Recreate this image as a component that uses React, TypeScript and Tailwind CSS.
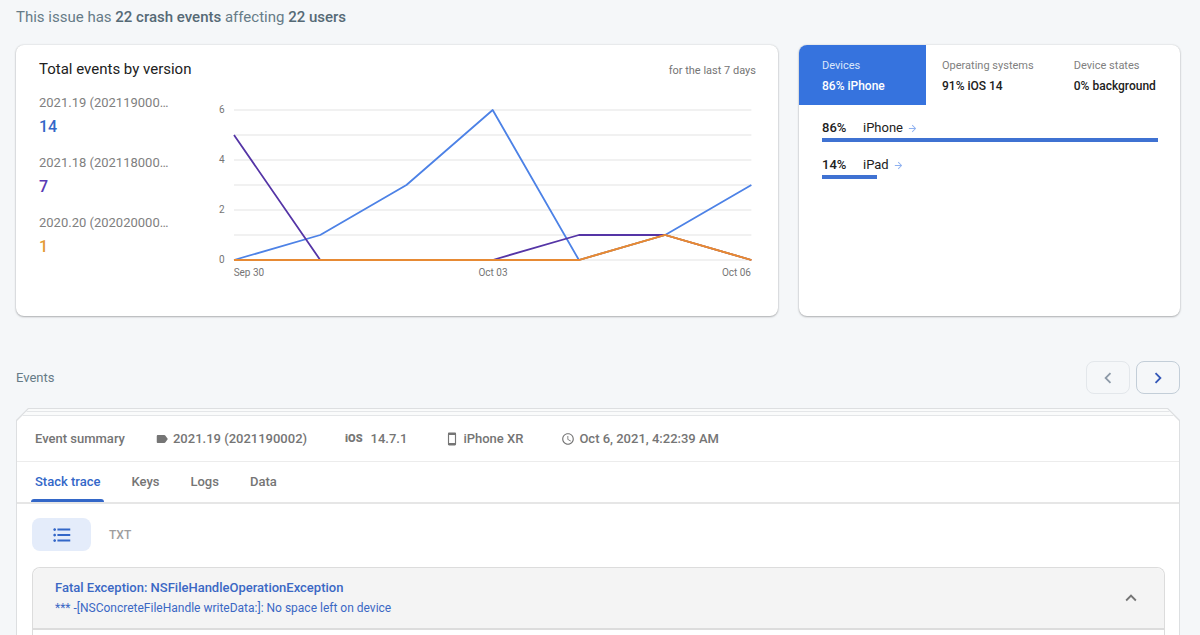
import { useState } from "react";
import {
  MdAccessTime,
  MdArrowForward,
  MdChevronLeft,
  MdChevronRight,
  MdFormatListBulleted,
  MdKeyboardArrowUp,
  MdLabel,
  MdStayPrimaryPortrait,
} from "react-icons/md";
import { clsx } from "clsx";

const MAX_EVENTS = 6;

const versions = [
  {
    name: "2021.19 (202119000…",
    total: 14,
    text: "text-[#3367c8]",
    stroke: "#4d82e6",
    series: [0, 1, 3, 6, 0, 1, 3],
  },
  {
    name: "2021.18 (202118000…",
    total: 7,
    text: "text-[#5a3bb5]",
    stroke: "#5535a6",
    series: [5, 0, 0, 0, 1, 1, 0],
  },
  {
    name: "2020.20 (202020000…",
    total: 1,
    text: "text-[#e39a35]",
    stroke: "#e78a34",
    series: [0, 0, 0, 0, 0, 1, 0],
  },
];

const breakdowns = [
  { label: "Devices", value: "86% iPhone" },
  { label: "Operating systems", value: "91% iOS 14" },
  { label: "Device states", value: "0% background" },
];

const devices = [
  { name: "iPhone", share: 86 },
  { name: "iPad", share: 14 },
];

const tabs = ["Stack trace", "Keys", "Logs", "Data"];

const cardClass =
  "overflow-hidden rounded-lg bg-white shadow-[0_1px_2px_rgba(60,64,67,0.35),0_0_2px_rgba(60,64,67,0.2)]";

// Break the line wherever it would just run along the zero axis.
function linePath(series: number[]) {
  let d = "";
  let pen = false;
  for (let i = 0; i < series.length - 1; i++) {
    if (series[i] === 0 && series[i + 1] === 0) {
      pen = false;
      continue;
    }
    if (!pen) d += `M${i * 100} ${(MAX_EVENTS - series[i]) * 25}`;
    d += `L${(i + 1) * 100} ${(MAX_EVENTS - series[i + 1]) * 25}`;
    pen = true;
  }
  return d;
}

function EventsChart() {
  return (
    <div className="flex min-w-0 flex-1 gap-[9px] text-[10px] leading-4 text-[#757575]">
      <div className="-my-2 flex h-[166px] flex-col justify-between">
        {[6, 4, 2, 0].map((n) => (
          <span key={n}>{n}</span>
        ))}
      </div>
      <div className="min-w-0 flex-1">
        <svg
          className="block h-[150px] w-full overflow-visible"
          viewBox="0 0 600 150"
          preserveAspectRatio="none"
          fill="none"
          role="img"
          aria-label="Events per day by version"
        >
          {[0, 25, 50, 75, 100, 125, 150].map((y) => (
            <path
              key={y}
              d={`M0 ${y}H600`}
              stroke="#ececec"
              strokeWidth="1.5"
              vectorEffect="non-scaling-stroke"
            />
          ))}
          {versions.map((v) => (
            <path
              key={v.name}
              d={linePath(v.series)}
              stroke={v.stroke}
              strokeWidth="1.8"
              strokeLinejoin="round"
              vectorEffect="non-scaling-stroke"
            />
          ))}
          <path
            d="M0 150H400L500 125L600 150"
            stroke={versions[2].stroke}
            strokeWidth="1.8"
            vectorEffect="non-scaling-stroke"
          />
        </svg>
        <div className="mt-[5px] flex justify-between">
          <span>Sep 30</span>
          <span>Oct 03</span>
          <span>Oct 06</span>
        </div>
      </div>
    </div>
  );
}

function VersionsCard() {
  return (
    <section className={clsx(cardClass, "pt-[14px] pr-[22px] pb-[35px] pl-[23px]")}>
      <div className="flex items-end justify-between">
        <h2 className="text-[15px] leading-5 text-[#212121]">
          Total events by version
        </h2>
        <span className="text-[11px] leading-4 text-[#757575]">
          for the last 7 days
        </span>
      </div>
      <div className="mt-[14px] flex gap-[50px] pr-[5px]">
        <ul className="flex w-[130px] flex-col gap-4">
          {versions.map((v) => (
            <li key={v.name}>
              <div className="text-[13px] leading-5 whitespace-nowrap text-[#808080]">
                {v.name}
              </div>
              <div
                className={clsx("mt-1 text-base leading-5 font-medium", v.text)}
              >
                {v.total}
              </div>
            </li>
          ))}
        </ul>
        <div className="flex min-w-0 flex-1 pt-[17px]">
          <EventsChart />
        </div>
      </div>
    </section>
  );
}

function DevicesCard() {
  const [selected, setSelected] = useState(0);
  const top = devices[0].share;

  return (
    <section className={cardClass}>
      <div className="flex">
        {breakdowns.map((b, i) => (
          <button
            key={b.label}
            type="button"
            onClick={() => setSelected(i)}
            className={clsx(
              "pt-[11px] pb-[9px] text-left leading-5",
              i === 0 ? "w-1/3 pl-[23px]" : "flex-auto pl-4",
              i === selected ? "bg-[#3673de] text-white" : "text-[#212121]",
            )}
          >
            <span
              className={clsx(
                "block text-[11px]",
                i === selected ? "text-[#dbe7fb]" : "text-[#808080]",
              )}
            >
              {b.label}
            </span>
            <span className="block text-[12px] font-medium">{b.value}</span>
          </button>
        ))}
      </div>
      <ul className="flex flex-col gap-[13px] pt-[13px] pr-[22px] pl-[23px]">
        {devices.map((d) => (
          <li key={d.name}>
            <div className="flex items-center text-[13px] leading-5 text-[#212121]">
              <span className="w-[41px] font-medium">{d.share}%</span>
              <a href="#" className="flex items-center gap-1">
                {d.name}
                <MdArrowForward className="size-[11px] text-[#8fb1f0]" />
              </a>
            </div>
            <div
              className="h-1 bg-[#3f72d2]"
              style={{ width: `${(d.share / top) * 100}%` }}
            />
          </li>
        ))}
      </ul>
    </section>
  );
}

function EventDetails() {
  const [tab, setTab] = useState(tabs[0]);

  return (
    <div className="flex flex-1 flex-col text-[13px] font-medium text-[#757575]">
      <div className="flex h-[46px] items-center gap-[38px] border-b border-[#ececec] pl-[18px] leading-5">
        <div className="flex items-center gap-[30px]">
          <h3>Event summary</h3>
          <span className="flex items-center gap-1">
            <MdLabel className="size-[14px]" />
            2021.19 (2021190002)
          </span>
        </div>
        <span className="flex items-center gap-2">
          <b className="text-[11px] font-black">iOS</b>
          14.7.1
        </span>
        <span className="flex items-center gap-1">
          <MdStayPrimaryPortrait className="size-[14px]" />
          iPhone XR
        </span>
        <span className="flex items-center gap-1">
          <MdAccessTime className="size-[14px]" />
          Oct 6, 2021, 4:22:39 AM
        </span>
      </div>

      <div className="flex h-[42px] gap-[23px] border-b-2 border-[#e6e6e6] pl-[14px]">
        {tabs.map((name) => (
          <button
            key={name}
            type="button"
            onClick={() => setTab(name)}
            className={clsx(
              "relative px-1",
              name === tab && "text-[#3367c8]",
            )}
          >
            {name}
            {name === tab && (
              <span className="absolute inset-x-0 bottom-0 h-[3px] rounded-t-sm bg-[#3367c8]" />
            )}
          </button>
        ))}
      </div>

      <div className="flex flex-1 flex-col pt-[14px] pr-[14px] pl-[15px]">
        <div className="flex gap-[18px]">
          <button
            type="button"
            aria-label="List view"
            className="flex h-[33px] w-[59px] items-center justify-center rounded-lg bg-[#e4ecfa] text-[#3367c8]"
          >
            <MdFormatListBulleted className="size-[22px]" />
          </button>
          <button type="button" className="text-[12px] text-[#9e9e9e]">
            TXT
          </button>
        </div>

        <div className="mt-4 flex-1 rounded-t-lg border border-b-0 border-[#dcdcdc]">
          <div className="flex items-center justify-between rounded-t-lg border-b-2 border-[#dcdcdc] bg-[#f4f4f4] py-[10px] pr-[22px] pl-[22px] text-[#3b68c4]">
            <div>
              <h4 className="leading-5">
                Fatal Exception: NSFileHandleOperationException
              </h4>
              <p className="text-[12px] leading-5 font-normal">
                *** -[NSConcreteFileHandle writeData:]: No space left on device
              </p>
            </div>
            <button type="button" aria-label="Collapse">
              <MdKeyboardArrowUp className="size-[22px] text-[#757575]" />
            </button>
          </div>
        </div>
      </div>
    </div>
  );
}

export default function App() {
  return (
    <main className="flex min-h-screen flex-col bg-[#f5f7f9] pt-[7px] pr-5 pl-4 font-[Roboto,sans-serif]">
      <p className="text-[15px] leading-5 text-[#667b87]">
        This issue has{" "}
        <strong className="font-medium text-[#566a76]">22 crash events</strong>{" "}
        affecting{" "}
        <strong className="font-medium text-[#566a76]">22 users</strong>
      </p>

      <div className="mt-[18px] grid grid-cols-[2fr_1fr] gap-[21px]">
        <VersionsCard />
        <DevicesCard />
      </div>

      <div className="mt-[45px] flex items-center justify-between">
        <h2 className="text-[13px] leading-5 text-[#667b87]">Events</h2>
        <div className="flex gap-[6px]">
          <button
            type="button"
            aria-label="Previous event"
            className="flex h-[33px] w-11 items-center justify-center rounded-lg border border-[#e3e7eb] text-[#8d9aa8]"
          >
            <MdChevronLeft className="size-[22px]" />
          </button>
          <button
            type="button"
            aria-label="Next event"
            className="flex h-[33px] w-11 items-center justify-center rounded-lg border border-[#c3ced8] text-[#3458b8]"
          >
            <MdChevronRight className="size-[22px]" />
          </button>
        </div>
      </div>

      {/* Stacked sheets peeking out above the current event */}
      <div className="mt-[14px] flex flex-1 flex-col bg-[#dddfe1] px-px pt-px [clip-path:polygon(12px_0,calc(100%-12px)_0,100%_12px,100%_100%,0_100%,0_12px)]">
        <div className="flex flex-1 flex-col bg-white [clip-path:polygon(12px_0,calc(100%-12px)_0,100%_12px,100%_100%,0_100%,0_12px)]">
          <div className="h-[3px] border-b border-[#e4e6e8] bg-[#fafbfb]" />
          <div className="h-1 border-b border-[#e4e6e8] bg-[#fafbfb]" />
          <EventDetails />
        </div>
      </div>
    </main>
  );
}
